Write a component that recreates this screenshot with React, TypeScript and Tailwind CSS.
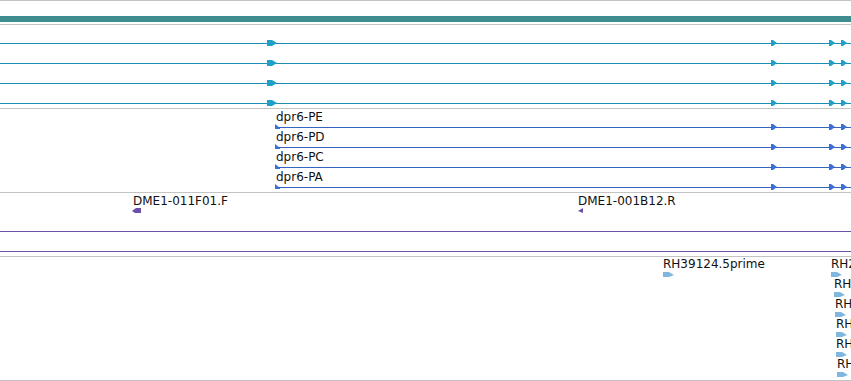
import React from "react";

type Glyph = { x: number; kind: "gene" | "geneHead" | "tx" | "txStart" | "estLeft" | "estTiny" | "cdna" };

const GLYPH_COLORS: Record<Glyph["kind"], string> = {
  gene: "#1fa0c9",
  geneHead: "#1fa0c9",
  tx: "#3a6fd6",
  txStart: "#3a6fd6",
  estLeft: "#6b4fa8",
  estTiny: "#6b4fa8",
  cdna: "#7fb7df",
};

function Arrow({ x, kind, top }: Glyph & { top: number }) {
  const fill = GLYPH_COLORS[kind];
  let w = 6;
  let h = 6;
  let points = "0,0 2,0 6,3 2,6 0,6";
  if (kind === "geneHead") {
    w = 10;
    points = "0,0 5,0 10,3 5,6 0,6";
  } else if (kind === "txStart") {
    w = 5;
    h = 5;
    points = "0,0 5,4 5,5 0,5";
  } else if (kind === "estLeft") {
    w = 9;
    h = 5;
    points = "0,3 4,0 9,0 9,5 3,5";
  } else if (kind === "estTiny") {
    w = 5;
    h = 5;
    points = "0,3 5,0 5,5";
  } else if (kind === "cdna") {
    w = 11;
    h = 5;
    points = "0,0 6,0 11,3 6,5 0,5";
  }
  return (
    <svg
      className="absolute"
      style={{ left: x, top }}
      width={w}
      height={h}
      viewBox={`0 0 ${w} ${h}`}
    >
      <polygon points={points} fill={fill} />
    </svg>
  );
}

function Divider() {
  return <div className="h-px w-full bg-[#c4c4c4]" />;
}

const geneRows = [0, 1, 2, 3];
const transcripts = ["dpr6-PE", "dpr6-PD", "dpr6-PC", "dpr6-PA"];

const cdnaRight = [
  { x: 831, label: "RH28134.5prime" },
  { x: 834, label: "RH27461.5prime" },
  { x: 835, label: "RH28872.5prime" },
  { x: 836, label: "RH29650.5prime" },
  { x: 836, label: "RH30155.5prime" },
  { x: 837, label: "RH31207.5prime" },
];

export default function App() {
  return (
    <div className="relative h-[381px] w-[851px] overflow-hidden bg-white font-['DejaVu_Sans',sans-serif] text-[12px] leading-[14px] text-[#111]">
      <Divider />
      {/* reference sequence bar */}
      <div className="h-[15px]" />
      <div className="h-[6px] w-full bg-[#3f8e8f]" />
      <div className="h-[2px]" />
      <Divider />

      {/* genes */}
      <div className="flex h-[83px] flex-col">
        {geneRows.map((r) => (
          <div key={r} className="relative h-[20px] shrink-0">
            <div className="absolute left-0 right-0 top-[18px] h-px bg-[#1b8db2]" />
            <Arrow x={267} kind="geneHead" top={15} />
            <Arrow x={771} kind="gene" top={15} />
            <Arrow x={829} kind="gene" top={15} />
            <Arrow x={841} kind="gene" top={15} />
          </div>
        ))}
      </div>
      <Divider />

      {/* transcripts */}
      <div className="flex h-[83px] flex-col">
        {transcripts.map((name) => (
          <div key={name} className="relative h-[20px] shrink-0">
            <span className="absolute left-[276px] top-[1px] whitespace-nowrap">{name}</span>
            <div className="absolute left-[276px] right-0 top-[18px] h-px bg-[#3464bd]" />
            <Arrow x={275} kind="txStart" top={15} />
            <Arrow x={771} kind="tx" top={15} />
            <Arrow x={829} kind="tx" top={15} />
            <Arrow x={841} kind="tx" top={15} />
          </div>
        ))}
      </div>
      <Divider />

      {/* ESTs */}
      <div className="flex h-[63px] flex-col">
        <div className="relative h-[20px] shrink-0">
          <span className="absolute left-[133px] top-[1px] whitespace-nowrap">DME1-011F01.F</span>
          <span className="absolute left-[578px] top-[1px] whitespace-nowrap">DME1-001B12.R</span>
          <Arrow x={132} kind="estLeft" top={15} />
          <Arrow x={578} kind="estTiny" top={15} />
        </div>
        <div className="relative h-[20px] shrink-0">
          <div className="absolute left-0 right-0 top-[18px] h-px bg-[#6a52a3]" />
        </div>
        <div className="relative h-[20px] shrink-0">
          <div className="absolute left-0 right-0 top-[18px] h-px bg-[#6a52a3]" />
        </div>
      </div>
      <Divider />

      {/* cDNA reads */}
      <div className="flex h-[123px] flex-col">
        {cdnaRight.map((c, i) => (
          <div key={c.label} className="relative h-[20px] shrink-0">
            {i === 0 ? (
              <>
                <span className="absolute left-[663px] top-0 whitespace-nowrap">RH39124.5prime</span>
                <Arrow x={663} kind="cdna" top={15} />
              </>
            ) : null}
            <span className="absolute top-0 whitespace-nowrap" style={{ left: c.x }}>
              {c.label}
            </span>
            <Arrow x={c.x} kind="cdna" top={15} />
          </div>
        ))}
      </div>
      <Divider />
    </div>
  );
}
